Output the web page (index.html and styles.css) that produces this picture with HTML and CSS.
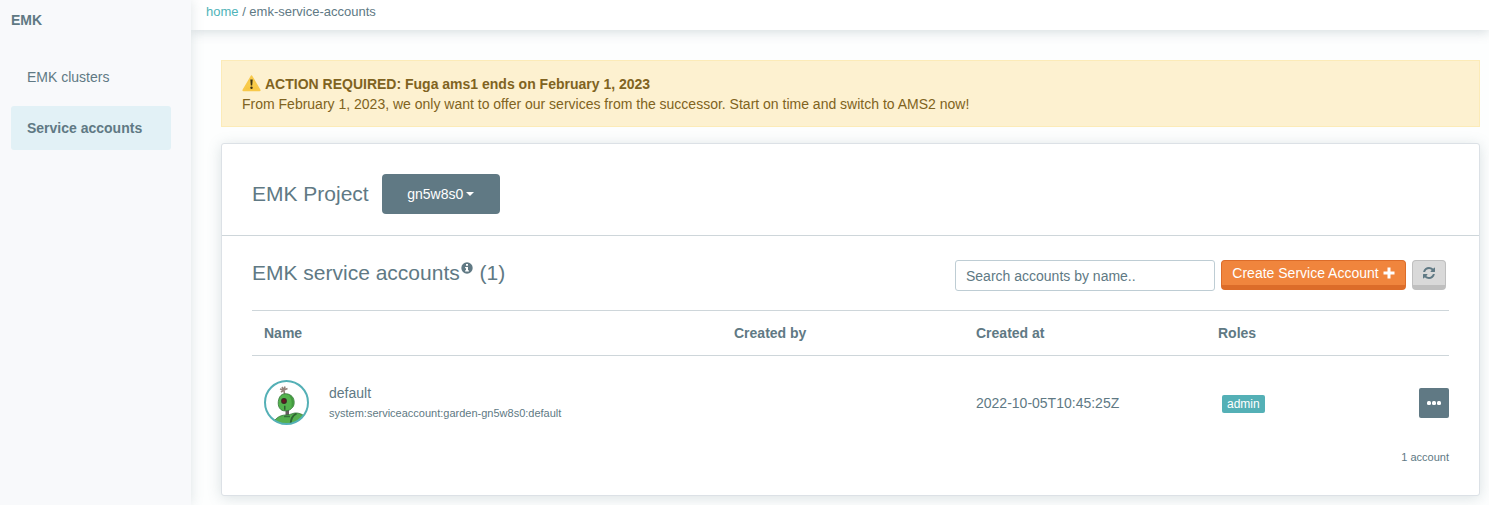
FILE: index.html
```html
<!DOCTYPE html>
<html lang="en">
<head>
  <meta charset="UTF-8">
  <title>EMK service accounts</title>
  <link rel="stylesheet" href="styles.css">
</head>
<body>
  <div class="layout">
    <aside class="sidebar">
      <div class="sidebar-title">EMK</div>
      <nav class="sidebar-nav">
        <a href="#">EMK clusters</a>
        <a href="#" class="active">Service accounts</a>
      </nav>
    </aside>

    <div class="page">
      <nav class="breadcrumb"><a href="#">home</a> / emk-service-accounts</nav>

      <main class="content">
        <div class="alert">
          <div class="alert-title">
            <svg class="warning" viewBox="0 0 19 19" aria-hidden="true">
              <defs>
                <linearGradient id="warn" x1="0" y1="0" x2="0" y2="1">
                  <stop offset="0" stop-color="#fbdc62"/>
                  <stop offset="1" stop-color="#f7c33c"/>
                </linearGradient>
              </defs>
              <path d="M9.5 1.4 17.6 15.2H1.4Z" fill="url(#warn)" stroke="#f8c94a" stroke-width="2" stroke-linejoin="round"/>
              <path d="M8.3 4.4h2.4l-.5 6H8.800Z" fill="#3d3313"/>
              <circle cx="9.5" cy="12.8" r="1.2" fill="#3d3313"/>
            </svg>
            <strong>ACTION REQUIRED: Fuga ams1 ends on February 1, 2023</strong>
          </div>
          <div>From February 1, 2023, we only want to offer our services from the successor. Start on time and switch to AMS2 now!</div>
        </div>

        <div class="card">
          <div class="card-header">
            <h2>EMK Project</h2>
            <button type="button" class="btn-project">gn5w8s0 <span class="caret"></span></button>
          </div>

          <div class="card-body">
            <div class="toolbar">
              <h2>EMK service accounts<svg class="info" viewBox="0 0 12 12" aria-hidden="true">
                <circle cx="6" cy="6" r="5.7" fill="#607984"/>
                <path d="M5 2h2v1.700H5ZM4.100 4.900h2.900v3.400h.9v1.300H4.100V8.300H5V6.200h-.9Z" fill="#fff"/>
              </svg> (1)</h2>
              <div class="actions">
                <input type="text" class="search" placeholder="Search accounts by name.." aria-label="Search accounts by name">
                <button type="button" class="btn btn-create">Create Service Account
                  <svg viewBox="0 0 12 12" width="12" height="12" aria-hidden="true"><path d="M4.500.5h3v4h4v3h-4v4h-3v-4h-4v-3h4Z" fill="#fff"/></svg>
                </button>
                <button type="button" class="btn btn-refresh" aria-label="Refresh">
                  <svg viewBox="0 0 1536 1536" width="12" height="12" aria-hidden="true">
                    <path fill="#607984" d="M1511 928q0 5-1 7-64 268-268 434.500T764 1536q-146 0-282.500-55T238 1324l-129 129q-19 19-45 19t-45-19-19-45V960q0-26 19-45t45-19h448q26 0 45 19t19 45-19 45l-137 137q71 66 161 102t187 36q134 0 250-65t186-179q11-17 53-117 8-23 30-23h192q13 0 22.500 9.500t9.500 22.500zM1536 128v448q0 26-19 45t-45 19h-448q-26 0-45-19t-19-45 19-45l138-138Q969 256 768 256q-134 0-250 65T332 500q-11 17-53 117-8 23-30 23H50q-13 0-22.500-9.500T18 608v-7q65-268 270-434.500T768 0q146 0 284 55.500T1297 212l130-129q19-19 45-19t45 19 19 45z"/>
                  </svg>
                </button>
              </div>
            </div>

            <table class="accounts">
              <thead>
                <tr>
                  <th class="col-name">Name</th>
                  <th class="col-mid">Created by</th>
                  <th class="col-mid">Created at</th>
                  <th>Roles</th>
                  <th class="col-menu"></th>
                </tr>
              </thead>
              <tbody>
                <tr>
                  <td>
                    <div class="account">
                      <svg class="avatar" viewBox="0 0 45 45" role="img" aria-label="Avatar">
                        <defs>
                          <clipPath id="round"><circle cx="22.5" cy="22.5" r="21.5"/></clipPath>
                        </defs>
                        <circle cx="22.5" cy="22.5" r="21.5" fill="#fff"/>
                        <g clip-path="url(#round)">
                          <path d="M20.500 14.500 20 10M20 10l-4-1M20 10l-2-3M20 10l1-3.500M20 10l3.500-1.500M20 10l-3 2" stroke="#96827a" stroke-width="1.600" fill="none"/>
                          <path d="M21.500 29h3.500v7h-3.500Z" fill="#675b60"/>
                          <path d="M8 45C11 38 16 35 22 35c5 0 7-2.500 11-2 3 .3 5 1.500 7 2.500L38 45Z" fill="#55b04f" stroke="#34733a" stroke-width=".8"/>
                          <path d="M32.500 33.500C28 36 27 39 26.500 45" stroke="#2e6532" stroke-width="2" fill="none"/>
                          <path d="M20 36.500h6" stroke="#34733a" stroke-width="1.500"/>
                          <path d="M14.300 21.500C15 16 18 13.300 22.500 13.800c5 .6 7.700 4 7.700 8.700 0 3-1.200 4.700-2.700 6-2 2.200-5 2.800-8.300 2.200-3.600-.9-5.400-4.700-4.900-9.200Z" fill="#54b34e" stroke="#34733a" stroke-width=".8"/>
                          <path d="M24.500 14.800c3.600 1.200 5.200 4.200 5 7.700-.1 2.500-1 4.200-2.200 5.200.8-5 .7-9-2.800-12.900Z" fill="#43993f"/>
                          <circle cx="20" cy="21" r="2.900" fill="#3a2a26"/>
                          <circle cx="20" cy="21" r="1.700" fill="#6b1720"/>
                          <path d="M20.800 25.800v4" stroke="#27492b" stroke-width="1.200"/>
                        </g>
                        <circle cx="22.5" cy="22.5" r="21.5" fill="none" stroke="#54b0b6" stroke-width="2"/>
                      </svg>
                      <div>
                        <div>default</div>
                        <div class="account-id">system:serviceaccount:garden-gn5w8s0:default</div>
                      </div>
                    </div>
                  </td>
                  <td></td>
                  <td>2022-10-05T10:45:25Z</td>
                  <td><span class="badge">admin</span></td>
                  <td class="col-menu">
                    <button type="button" class="btn-menu" aria-label="More actions">
                      <svg viewBox="0 0 16 4" width="16" height="4" aria-hidden="true">
                        <rect x="1" width="4" height="4" rx="1.5"/><rect x="6" width="4" height="4" rx="1.5"/><rect x="11" width="4" height="4" rx="1.5"/>
                      </svg>
                    </button>
                  </td>
                </tr>
              </tbody>
            </table>
            <div class="total">1 account</div>
          </div>
        </div>
      </main>
    </div>
  </div>
</body>
</html>
```
FILE: styles.css
```css
* {
  box-sizing: border-box;
}

body {
  margin: 0;
  font-family: "Liberation Sans", Arial, sans-serif;
  font-size: 14px;
  line-height: 20px;
  color: #607984;
  background: #fdfefe;
}

button, input {
  font: inherit;
}

h2 {
  margin: 0;
  font-size: 21px;
  font-weight: normal;
  line-height: 26px;
}

.layout {
  display: flex;
  min-height: 100vh;
}

.sidebar {
  flex: 0 0 191px;
  padding: 10px 20px 0 11px;
  background: #f8f9fb;
  box-shadow: 0 0 12px rgba(96, 121, 132, 0.2);
  position: relative;
}

.sidebar-title {
  font-weight: bold;
  margin-bottom: 25px;
}

.sidebar-nav {
  display: flex;
  flex-direction: column;
  gap: 7px;
}

.sidebar-nav a {
  padding: 12px 16px;
  border-radius: 3px;
  color: inherit;
  text-decoration: none;
}

.sidebar-nav .active {
  background: #e2f1f6;
  font-weight: bold;
}

.page {
  flex: 1;
  min-width: 0;
}

.breadcrumb {
  height: 30px;
  padding: 2px 15px;
  font-size: 13px;
  background: #fff;
  box-shadow: 0 2px 12px rgba(96, 121, 132, 0.25);
}

.breadcrumb a {
  color: #4fb3b8;
  text-decoration: none;
}

.content {
  padding: 30px 9px 9px 30px;
}

.alert {
  padding: 13px 20px 12px;
  margin-bottom: 16px;
  border: 1px solid #fcebb8;
  background: #fdf1d0;
  color: #806321;
}

.alert-title {
  display: flex;
  align-items: center;
  gap: 4px;
}

.warning {
  width: 19px;
  height: 19px;
}

.card {
  border: 1px solid #dce1e6;
  border-radius: 3px;
  background: #fff;
  box-shadow: 0 2px 14px rgba(96, 121, 132, 0.22);
}

.card-header {
  display: flex;
  align-items: center;
  gap: 13px;
  padding: 30px 30px 21px;
  border-bottom: 1px solid #ced6da;
}

.btn-project {
  display: flex;
  align-items: center;
  justify-content: center;
  gap: 3px;
  width: 118px;
  height: 40px;
  border: 0;
  border-radius: 4px;
  background: #607984;
  color: #fff;
}

.caret {
  border: 4px solid transparent;
  border-top-color: #fff;
  border-bottom: 0;
}

.card-body {
  padding: 24px 30px 31px;
}

.toolbar {
  display: flex;
  justify-content: space-between;
  padding-right: 3px;
  margin-bottom: 19px;
}

.info {
  width: 12px;
  height: 12px;
  margin: 0 1px;
  vertical-align: 6px;
}

.actions {
  display: flex;
  gap: 6px;
}

.search {
  width: 260px;
  height: 31px;
  padding: 0 10px;
  border: 1px solid #becdd4;
  border-radius: 3px;
  background: #fff;
  color: inherit;
}

.search::placeholder {
  color: #607984;
  opacity: 1;
}

.btn {
  display: flex;
  align-items: center;
  justify-content: center;
  gap: 4px;
  height: 30px;
  padding: 0;
  border: 1px solid;
  border-bottom-width: 5px;
  border-radius: 4px;
}

.btn-create {
  width: 185px;
  border-color: #dc6c29;
  background: #f0853d;
  color: #fff;
}

.btn-refresh {
  width: 34px;
  border-color: #bfbfbf;
  background: #d9d9d9;
}

.accounts {
  width: 100%;
  table-layout: fixed;
  border-collapse: collapse;
}

.accounts th {
  height: 45px;
  padding: 0 12px;
  border-top: 1px solid #ced6da;
  border-bottom: 1px solid #ced6da;
  text-align: left;
}

.accounts td {
  height: 94px;
  padding: 0 12px;
}

.accounts .col-name {
  width: 470px;
}

.accounts .col-mid {
  width: 242px;
}

.accounts .col-menu {
  width: 70px;
  padding-right: 0;
  text-align: right;
}

.account {
  display: flex;
  align-items: center;
  gap: 20px;
}

.avatar {
  width: 45px;
  height: 45px;
}

.account-id,
.total {
  font-size: 11px;
}

.badge {
  display: inline-block;
  margin-left: 4px;
  padding: 0 5px;
  border-radius: 2px;
  background: #54b0b6;
  color: #fff;
  font-size: 12px;
  line-height: 18px;
}

.btn-menu {
  display: inline-flex;
  align-items: center;
  justify-content: center;
  width: 30px;
  height: 30px;
  padding: 0;
  border: 0;
  border-radius: 2px;
  background: #607984;
  fill: #fff;
  vertical-align: middle;
}

.total {
  line-height: 14px;
  text-align: right;
}
```
